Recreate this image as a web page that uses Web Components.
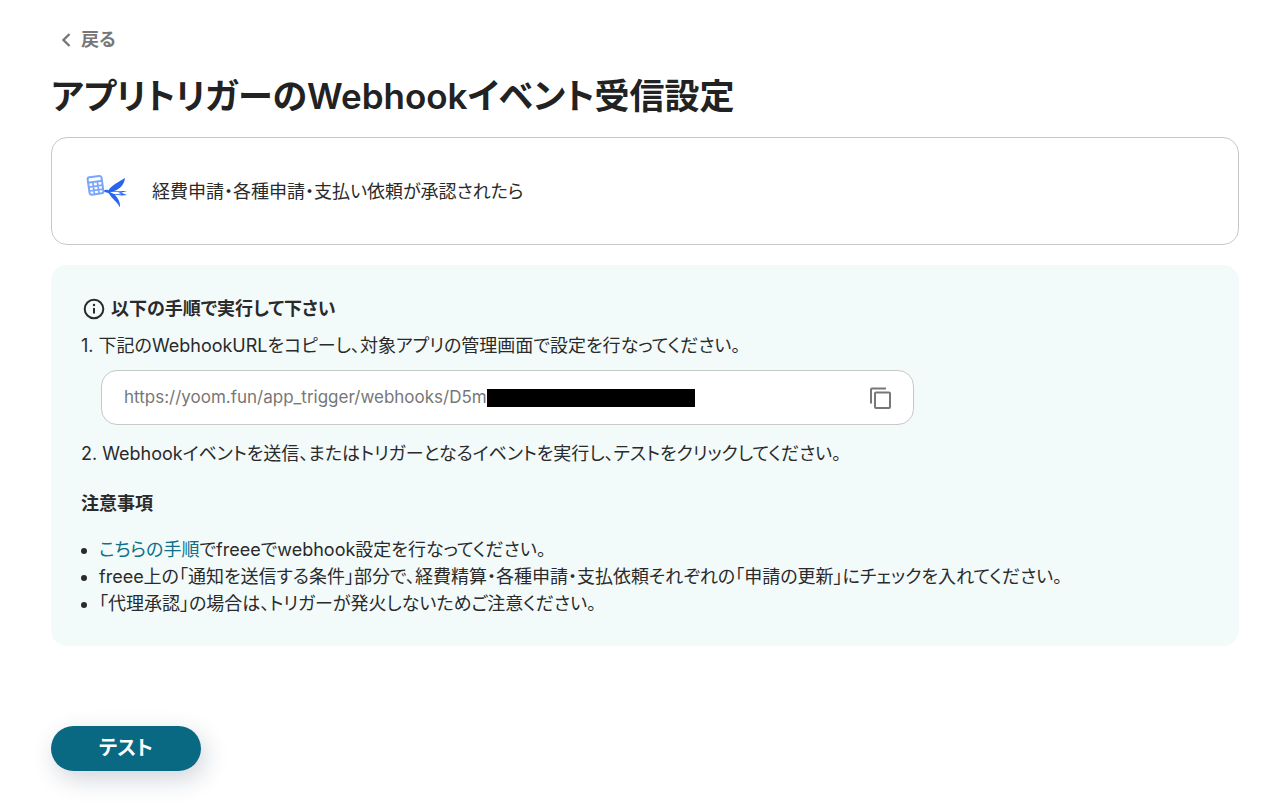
<!DOCTYPE html>
<html lang="ja">
<head>
<meta charset="utf-8">
<meta name="viewport" content="width=device-width, initial-scale=1">
<title>アプリトリガーのWebhookイベント受信設定</title>
<style>
  body {
    margin: 0;
    background: #fff;
    color: #2a2a2a;
    font-family: Inter, "Noto Sans CJK JP", sans-serif;
    font-size: 18px;
    line-height: 27px;
    font-feature-settings: "palt";
  }
</style>
</head>
<body>
<webhook-page></webhook-page>

<script>
function define(name, markup, setup) {
  const template = document.createElement('template');
  template.innerHTML = markup;
  customElements.define(name, class extends HTMLElement {
    constructor() {
      super();
      this.attachShadow({ mode: 'open' }).append(template.content.cloneNode(true));
    }
    connectedCallback() {
      if (setup) setup(this, this.shadowRoot);
    }
  });
}

define('back-link', `
  <style>
    :host { display: block; }
    a { display: inline-flex; align-items: center; gap: 8px; color: #777; font-weight: 600; line-height: 24px; text-decoration: none; }
    svg { display: block; }
  </style>
  <a href="#"><svg width="12" height="16" viewBox="0 0 12 16" fill="none" stroke="currentColor" stroke-width="2.4" aria-hidden="true"><path d="M8.500 2 2.500 8l6 6"/></svg><slot></slot></a>
`);

define('trigger-card', `
  <style>
    :host { display: flex; align-items: center; gap: 24px; box-sizing: border-box; min-height: 108px; padding: 20px 32px; border: 1px solid #c8c8c8; border-radius: 16px; background: #fff; }
    svg { display: block; flex: none; }
  </style>
  <svg width="44" height="44" viewBox="0 0 44 44" aria-hidden="true">
    <g transform="rotate(-8 12 16)" fill="none" stroke="#79a5fa">
      <rect x="4.500" y="7.500" width="14" height="17.500" rx="2" stroke-width="2"/>
      <path d="M4.500 12.600h14" stroke-width="2"/>
      <path d="M4.500 17h14M4.500 21h14M9.200 13v12M13.800 13v12" stroke-width="1.700"/>
    </g>
    <path fill="#2864f0" d="M19.500 22c1.500-1.400 3.300-1.500 5-.8C28 16 34 13.500 41 9c-.8 6.500-4.500 10.500-10.500 13L43 22l-6 1.700 6 2.300c-5 .8-9.500.3-12.500-.5C34 29 36.500 33 36 38.500c-2.500-5.500-8-8.500-11.500-14.500-2-.2-3.500-1-5-2Z"/>
    <path fill="#fff" d="M26 23.300 30 22.800 38 22.800 34 23.700 38 25.300 30 25Z"/>
  </svg>
  <slot></slot>
`);

define('info-heading', `
  <style>
    :host { display: block; }
    h2 { display: flex; align-items: center; gap: 6px; margin: 0; font-size: 18px; font-weight: 600; line-height: 27px; }
    svg { display: block; margin-left: 2px; }
  </style>
  <h2><svg width="22" height="22" viewBox="0 0 22 22" fill="none" stroke="currentColor" stroke-width="2" aria-hidden="true"><circle cx="11" cy="11" r="9.300"/><path d="M11 10v5.500"/><circle cx="11" cy="7" r="1.200" fill="currentColor" stroke="none"/></svg><slot></slot></h2>
`);

define('copy-field', `
  <style>
    :host { display: flex; align-items: center; box-sizing: border-box; max-width: 813px; height: 55px; padding: 0 21px 0 22px; border: 1px solid #c8c8c8; border-radius: 16px; background: #fff; }
    input { field-sizing: content; min-width: 0; padding: 0; border: 0; outline: 0; background: none; color: #777; font: inherit; font-size: 17px; }
    .mask { width: 208px; height: 18px; background: #000; }
    button { display: block; margin-left: auto; padding: 0; border: 0; background: none; color: #777; cursor: pointer; }
    svg { display: block; }
  </style>
  <input type="text" readonly aria-label="WebhookURL">
  <span class="mask"></span>
  <button type="button" aria-label="コピー"><svg width="24" height="24" viewBox="0 0 24 24" fill="none" stroke="currentColor" stroke-width="2" aria-hidden="true"><path d="M3 17.500V3.500A1 1 0 0 1 4 2.500H18"/><rect x="7" y="6.500" width="15" height="15.500" rx="1"/></svg></button>
`, (host, root) => { root.querySelector('input').value = host.getAttribute('value'); });

define('note-list', `
  <style>
    :host { display: block; }
    h3 { margin: 0 0 19px; font-size: 18px; font-weight: 600; line-height: 26px; }
    ul { margin: 0; padding-left: 18px; }
    li { line-height: 27px; }
    a { color: #0f708a; text-decoration: none; }
  </style>
  <h3>注意事項</h3>
  <ul>
    <li><a href="#">こちらの手順</a>でfreeeでwebhook設定を行なってください。</li>
    <li>freee上の「通知を送信する条件」部分で、経費精算・各種申請・支払依頼それぞれの「申請の更新」にチェックを入れてください。</li>
    <li>「代理承認」の場合は、トリガーが発火しないためご注意ください。</li>
  </ul>
`);

define('instruction-panel', `
  <style>
    :host { display: block; padding: 30px 30px 29px; border-radius: 16px; background: #f2fafa; }
    p { margin: 0; }
    .first { margin-top: 10px; }
    copy-field { margin: 11px 0 15px 20px; }
    note-list { margin-top: 24px; }
  </style>
  <info-heading>以下の手順で実行して下さい</info-heading>
  <p class="first">1. 下記のWebhookURLをコピーし、対象アプリの管理画面で設定を行なってください。</p>
  <copy-field value="https://yoom.fun/app_trigger/webhooks/D5m"></copy-field>
  <p>2. Webhookイベントを送信、またはトリガーとなるイベントを実行し、テストをクリックしてください。</p>
  <note-list></note-list>
`);

define('primary-button', `
  <style>
    :host { display: block; }
    button { display: block; min-width: 150px; height: 45px; padding: 0 24px; border: 0; border-radius: 24px; background: #096882; box-shadow: 4px 8px 24px rgba(20, 40, 70, .2); color: #fff; font: inherit; font-size: 20px; font-weight: 600; font-feature-settings: inherit; cursor: pointer; }
  </style>
  <button type="button"><slot></slot></button>
`);

define('webhook-page', `
  <style>
    :host { display: block; padding: 28px 49px 32px 51px; }
    back-link { margin-left: 10px; }
    h1 { margin: 17px 0; color: #222; font-size: 35px; font-weight: 600; line-height: 48px; }
    instruction-panel { margin-top: 20px; }
    primary-button { margin-top: 80px; }
  </style>
  <main>
    <back-link>戻る</back-link>
    <h1>アプリトリガーのWebhookイベント受信設定</h1>
    <trigger-card>経費申請・各種申請・支払い依頼が承認されたら</trigger-card>
    <instruction-panel></instruction-panel>
    <primary-button>テスト</primary-button>
  </main>
`);
</script>
</body>
</html>
